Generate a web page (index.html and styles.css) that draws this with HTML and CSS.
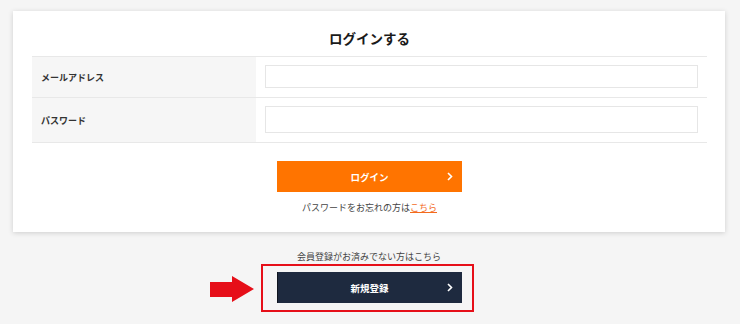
FILE: index.html
```html
<!DOCTYPE html>
<html lang="ja">

<head>
    <meta charset="UTF-8" />
    <meta name="viewport" content="width=device-width, initial-scale=1.0" />
    <title>ログイン</title>
    <link rel="stylesheet" href="styles.css">
</head>

<body>
    <div class="login-box">
        <h2 class="login-title">ログインする</h2>

        <div class="login-table">
            <div class="login-row">
                <div class="login-label">メールアドレス</div>
                <div class="login-field"><input type="text" class="input-mail"></div>
            </div>
            <div class="login-row">
                <div class="login-label">パスワード</div>
                <div class="login-field"><input type="password" class="input-pass"></div>
            </div>
        </div>

        <div class="btn-container">
            <button class="btn btn-login">
                ログイン
                <svg class="chevron" width="6" height="9" viewBox="0 0 6 9">
                    <polyline points="1,1 4.5,4.5 1,8" fill="none" stroke="#fff" stroke-width="1.6" />
                </svg>
            </button>
        </div>
        <p class="forgot">パスワードをお忘れの方は<a href="#">こちら</a></p>
    </div>

    <div class="register">
        <p class="register-text">会員登録がお済みでない方はこちら</p>
        <div class="register-wrap">
            <!-- 注釈（赤枠と矢印） -->
            <svg class="mark-arrow" width="45" height="27" viewBox="0 0 45 27">
                <polygon points="0,6 22,6 22,0 44,13 22,26 22,21 0,21" fill="#e60f19" />
            </svg>
            <div class="mark-box"></div>
            <button class="btn btn-register">
                新規登録
                <svg class="chevron" width="6" height="9" viewBox="0 0 6 9">
                    <polyline points="1,1 4.5,4.5 1,8" fill="none" stroke="#fff" stroke-width="1.6" />
                </svg>
            </button>
        </div>
    </div>
</body>

</html>
```
FILE: styles.css
```css
* {
    margin: 0;
    padding: 0;
    box-sizing: border-box;
    font-family: "Noto Sans CJK JP", "Noto Sans", sans-serif;
}

html,
body {
    min-height: 324px;
}

body {
    background: #f5f5f5;
    color: #222;
    width: 740px;
    padding-bottom: 20px;
}

.login-box {
    background: #fff;
    margin: 11px 15px 0 13px;
    padding: 0 18px 17px 19px;
    box-shadow: 0 1px 5px rgba(0, 0, 0, 0.16);
}

.login-title {
    font-size: 13.5px;
    font-weight: bold;
    line-height: 18px;
    text-align: center;
    padding-top: 18px;
    margin-bottom: 9px;
    color: #1a1a1a;
}

.login-table {
    border-top: 1px solid #e8e8e8;
}

.login-row {
    display: flex;
    border-bottom: 1px solid #e8e8e8;
}

.login-label {
    width: 224px;
    background: #f6f6f6;
    font-size: 9px;
    font-weight: bold;
    color: #333;
    padding-left: 9px;
    display: flex;
    align-items: center;
}

.login-field {
    flex: 1;
    padding: 8px 9px 9px 9px;
}

.login-field input {
    width: 100%;
    display: block;
    border: 1px solid #e6e6e6;
    background: #fff;
}

.input-mail {
    height: 23px;
}

.input-pass {
    height: 27px;
}

.btn-container {
    display: flex;
    justify-content: center;
    margin-top: 18px;
}

.btn {
    position: relative;
    width: 185px;
    height: 31px;
    border: none;
    color: #fff;
    font-size: 9.5px;
    font-weight: bold;
    display: flex;
    align-items: center;
    justify-content: center;
    cursor: pointer;
}

.btn .chevron {
    position: absolute;
    right: 9px;
    top: 11px;
}

.btn-login {
    background: #ff7400;
}

.forgot {
    text-align: center;
    font-size: 9px;
    line-height: 14px;
    margin-top: 9px;
    color: #444;
}

.forgot a {
    color: #f36b1c;
}

.register {
    display: flex;
    flex-direction: column;
    align-items: center;
    margin-left: 13px;
    margin-right: 15px;
}

.register-text {
    font-size: 9px;
    line-height: 14px;
    margin-top: 18px;
    color: #444;
}

.register-wrap {
    position: relative;
    margin-top: 8px;
}

.btn-register {
    background: #1e2a3f;
    border-left: 1px solid #10151f;
}

.mark-box {
    position: absolute;
    top: -8px;
    bottom: -9px;
    left: -16px;
    right: -12px;
    border: 2px solid #e60f19;
}

.mark-arrow {
    position: absolute;
    left: -67px;
    top: 4px;
}
```
